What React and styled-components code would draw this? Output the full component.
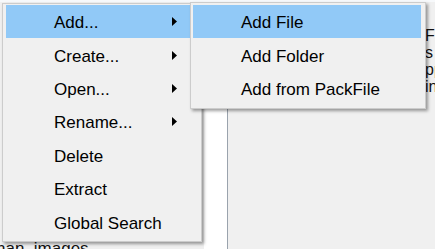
import React from "react";
import styled, { createGlobalStyle } from "styled-components";

const Global = createGlobalStyle`
  html, body {
    margin: 0;
    padding: 0;
    overflow: hidden;
    background: #f0f0f0;
  }
  body {
    font-family: "Liberation Sans", Arial, sans-serif;
  }
`;

const Screen = styled.div`
  position: relative;
  width: 435px;
  height: 249px;
  overflow: hidden;
  display: flex;
  flex-direction: column;
  background: #f0f0f0;
`;

const TopStrip = styled.div`
  height: 2px;
  background: #f7f9fb;
  flex-shrink: 0;
`;

const Body = styled.div`
  flex: 1;
  display: flex;
  min-height: 0;
`;

const TreePane = styled.div`
  width: 204px;
  background: #f0f0f0;
  display: flex;
  flex-direction: column;
  justify-content: flex-end;
  overflow: hidden;
`;

const TreeItem = styled.div`
  font-size: 17px;
  color: #111;
  white-space: nowrap;
  margin-left: -4px;
  margin-bottom: -10px;
  line-height: 20px;
`;

const WhiteColumn = styled.div`
  width: 23px;
  background: #ffffff;
  border-right: 1px solid #9aa3ad;
`;

const DetailPane = styled.div`
  flex: 1;
  background: #f0f0f0;
  padding: 25px 0 0 197px;
  overflow: hidden;
  font-size: 16px;
  line-height: 17px;
  color: #111;
  white-space: nowrap;
`;

const Menu = styled.div`
  position: absolute;
  left: ${(p) => p.$left}px;
  top: ${(p) => p.$top}px;
  width: ${(p) => p.$width}px;
  box-sizing: border-box;
  background: #f0f0f0;
  border: 1px solid #cccccc;
  padding: ${(p) => p.$pad};
  box-shadow: 2px 2px 3px rgba(0, 0, 0, 0.38);
  font-family: "Liberation Sans", Arial, sans-serif;
  font-size: 17px;
  color: #000;
`;

const Item = styled.div`
  height: 33.4px;
  box-sizing: border-box;
  display: flex;
  align-items: center;
  padding: 3px ${(p) => p.$right}px 0 48px;
  background: ${(p) => (p.$active ? "#91c9f7" : "transparent")};
  white-space: nowrap;
`;

const Label = styled.span`
  flex: 1;
`;

const Arrow = () => (
  <svg width="5" height="9" viewBox="0 0 5 9" style={{ marginTop: -3 }}>
    <polygon points="0,0 5,4.5 0,9" fill="#000" />
  </svg>
);

const mainItems = [
  { label: "Add...", sub: true, active: true },
  { label: "Create...", sub: true },
  { label: "Open...", sub: true },
  { label: "Rename...", sub: true },
  { label: "Delete" },
  { label: "Extract" },
  { label: "Global Search" },
];

const subItems = ["Add File", "Add Folder", "Add from PackFile"];

export default function App() {
  return (
    <>
      <Global />
      <Screen>
        <TopStrip />
        <Body>
          <TreePane>
            <TreeItem>han_images</TreeItem>
          </TreePane>
          <WhiteColumn />
          <DetailPane>
            <div>File</div>
            <div>s</div>
            <div>pp</div>
            <div>in</div>
          </DetailPane>
        </Body>

        <Menu $left={2} $top={3} $width={200} $pad="1px 3px 2px 3px">
          {mainItems.map((it) => (
            <Item key={it.label} $active={it.active} $right={21}>
              <Label>{it.label}</Label>
              {it.sub && <Arrow />}
            </Item>
          ))}
        </Menu>

        <Menu $left={190} $top={2} $width={236} $pad="2px 4px 3px 2px">
          {subItems.map((s, i) => (
            <Item key={s} $active={i === 0} $right={8}>
              <Label>{s}</Label>
            </Item>
          ))}
        </Menu>
      </Screen>
    </>
  );
}
